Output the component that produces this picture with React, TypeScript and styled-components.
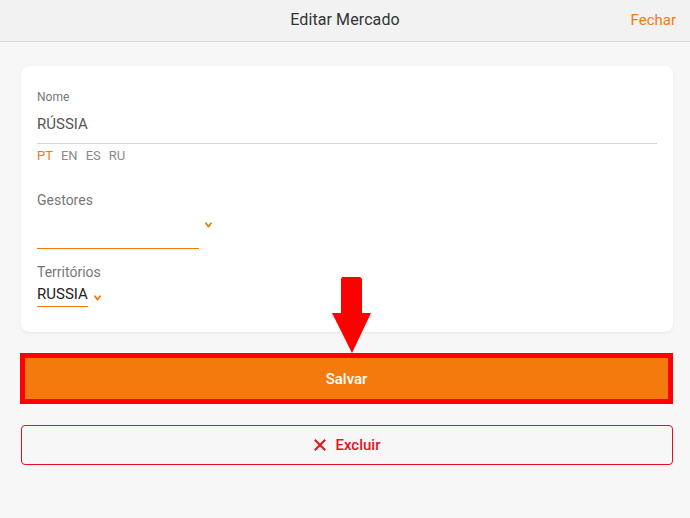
import React from "react";
import styled, { createGlobalStyle } from "styled-components";

const Global = createGlobalStyle`
  html, body { margin: 0; padding: 0; background: #f7f7f7; }
  body { font-family: Roboto, "Noto Sans", Arial, sans-serif; -webkit-font-smoothing: antialiased; }
  * { box-sizing: border-box; }
`;

const Page = styled.div`
  position: relative;
  width: 690px;
  min-height: 518px;
  background: #f7f7f7;
`;

const Header = styled.header`
  height: 42px;
  background: #f2f2f2;
  border-bottom: 1px solid #d9d9d9;
  display: grid;
  grid-template-columns: 1fr auto 1fr;
  align-items: center;
  padding: 0 14px 2px;
`;

const Title = styled.h1`
  grid-column: 2;
  margin: 0;
  font-size: 16px;
  font-weight: 400;
  color: #333;
  letter-spacing: 0.1px;
`;

const Close = styled.button`
  grid-column: 3;
  justify-self: end;
  background: none;
  border: 0;
  padding: 0;
  font: inherit;
  font-size: 15px;
  color: #f47a0d;
  cursor: pointer;
`;

const Content = styled.main`
  padding: 24px 17px 0 21px;
  display: flex;
  flex-direction: column;
`;

const Card = styled.section`
  width: 652px;
  background: #fff;
  border-radius: 8px;
  box-shadow: 0 1px 3px rgba(0, 0, 0, 0.07);
  padding: 24px 16px 25px;
  display: flex;
  flex-direction: column;
`;

const SmallLabel = styled.div`
  font-size: 12px;
  line-height: 14px;
  color: #777;
`;

const TextField = styled.div`
  height: 40px;
  border-bottom: 1px solid #d6d6d6;
  display: flex;
  align-items: center;
  font-size: 15px;
  color: #555;
`;

const LangRow = styled.div`
  display: flex;
  gap: 8px;
  height: 22px;
  align-items: center;
`;

const Lang = styled.span<{ $active?: boolean }>`
  font-size: 13px;
  color: ${(p) => (p.$active ? "#f47a0d" : "#8a8a8a")};
`;

const FieldLabel = styled.div<{ $mt: number }>`
  margin-top: ${(p) => p.$mt}px;
  font-size: 14px;
  line-height: 20px;
  color: #777;
`;

const SelectRow = styled.div`
  display: flex;
  align-items: flex-start;
  gap: 6px;
`;

const SelectBox = styled.div<{ $w?: number; $h: number; $mt?: number }>`
  width: ${(p) => (p.$w ? `${p.$w}px` : "auto")};
  height: ${(p) => p.$h}px;
  margin-top: ${(p) => p.$mt || 0}px;
  border-bottom: 1px solid #f47a0d;
  font-size: 15px;
  line-height: 21px;
  color: #222;
`;

const Chevron = styled.svg<{ $mt: number }>`
  margin-top: ${(p) => p.$mt}px;
  flex: none;
`;

const SaveButton = styled.button`
  margin-top: 21px;
  margin-left: -1px;
  width: 653px;
  height: 51px;
  background: #f47a0d;
  border: 5px solid #ff0000;
  color: #fff;
  font: inherit;
  font-size: 15px;
  font-weight: 500;
  cursor: pointer;
`;

const DeleteButton = styled.button`
  margin-top: 21px;
  width: 652px;
  height: 40px;
  background: transparent;
  border: 1px solid #e8101e;
  border-radius: 4px;
  color: #e8101e;
  font: inherit;
  font-size: 15px;
  font-weight: 500;
  display: flex;
  align-items: center;
  justify-content: center;
  gap: 10px;
  cursor: pointer;
`;

const Arrow = styled.svg`
  position: absolute;
  left: 332px;
  top: 277px;
`;

const ChevronIcon = ({ mt }: { mt: number }) => (
  <Chevron $mt={mt} width="7" height="6" viewBox="0 0 7 6">
    <path d="M1 1.2 L3.5 4.6 L6 1.2" fill="none" stroke="#f47a0d" strokeWidth="1.8" strokeLinecap="round" strokeLinejoin="round" />
  </Chevron>
);

export default function App() {
  return (
    <Page>
      <Global />
      <Header>
        <Title>Editar Mercado</Title>
        <Close>Fechar</Close>
      </Header>
      <Content>
        <Card>
          <SmallLabel>Nome</SmallLabel>
          <TextField>RÚSSIA</TextField>
          <LangRow>
            <Lang $active>PT</Lang>
            <Lang>EN</Lang>
            <Lang>ES</Lang>
            <Lang>RU</Lang>
          </LangRow>
          <FieldLabel $mt={24}>Gestores</FieldLabel>
          <SelectRow>
            <SelectBox $w={162} $h={39} />
            <ChevronIcon mt={12} />
          </SelectRow>
          <FieldLabel $mt={13}>Territórios</FieldLabel>
          <SelectRow>
            <SelectBox $h={23} $mt={2}>RUSSIA</SelectBox>
            <ChevronIcon mt={13} />
          </SelectRow>
        </Card>
        <SaveButton>Salvar</SaveButton>
        <DeleteButton>
          <svg width="12" height="12" viewBox="0 0 12 12">
            <path d="M1.5 1.5 L10.5 10.5 M10.5 1.5 L1.5 10.5" stroke="#e8101e" strokeWidth="2" strokeLinecap="square" />
          </svg>
          Excluir
        </DeleteButton>
      </Content>
      <Arrow width="40" height="77" viewBox="0 0 40 77">
        <path d="M11 0 H27 Q30 0 30 3 V36 H39 L20 76 L0 36 H9 V3 Q9 0 11 0 Z" fill="#ff0000" />
      </Arrow>
    </Page>
  );
}
